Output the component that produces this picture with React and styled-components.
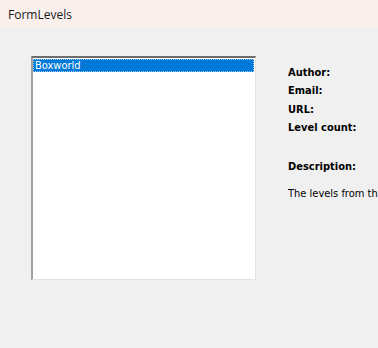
import styled, { createGlobalStyle } from 'styled-components';

const GlobalStyle = createGlobalStyle`
  html, body {
    margin: 0;
    padding: 0;
    background: #f0f0f0;
  }
`;

const Window = styled.div`
  width: 378px;
  height: 348px;
  background: #f0f0f0;
  display: flex;
  flex-direction: column;
  overflow: hidden;
`;

const TitleBar = styled.div`
  height: 28px;
  flex: none;
  background: #f9f0ee;
  display: flex;
  align-items: center;
  padding-left: 8px;
  font-family: "Segoe UI", "Open Sans", "Noto Sans", sans-serif;
  font-size: 12px;
  color: #1b1b1b;
`;

const Body = styled.div`
  display: flex;
  padding: 28px 0 0 31px;
  gap: 32px;
  overflow: hidden;
`;

const ListBox = styled.div`
  flex: none;
  width: 225px;
  height: 224px;
  box-sizing: border-box;
  background: #fff;
  border-style: solid;
  border-width: 2px 1px 1px 2px;
  border-color: #6d6d6d #e3e3e3 #e3e3e3 #a0a0a0;
  padding: 1px 1px 0 0;
`;

const ListItem = styled.div`
  height: 13px;
  line-height: 13px;
  padding-left: 2px;
  font-family: Tahoma, "DejaVu Sans", "Liberation Sans", sans-serif;
  font-stretch: condensed;
  font-size: 11px;
  color: ${p => (p.selected ? '#fff' : '#000')};
  background: ${p => (p.selected ? '#0078d7' : 'transparent')};
  outline: ${p => (p.selected ? '1px dotted #9ec9f0' : 'none')};
  outline-offset: -1px;
`;

const Info = styled.div`
  flex: none;
  display: flex;
  flex-direction: column;
  padding-top: 10px;
  font-family: Tahoma, "DejaVu Sans", "Liberation Sans", sans-serif;
  font-stretch: condensed;
  font-size: 11px;
  color: #000;
  white-space: nowrap;
`;

const Label = styled.div`
  font-weight: bold;
  height: 18.3px;
  line-height: 14px;
  margin-top: ${p => p.gap || 0}px;
`;

const Text = styled.div`
  margin-top: 9px;
  line-height: 14px;
`;

export default function App() {
  return (
    <>
      <GlobalStyle />
      <Window>
        <TitleBar>FormLevels</TitleBar>
        <Body>
          <ListBox>
            <ListItem selected>Boxworld</ListItem>
          </ListBox>
          <Info>
            <Label>Author:</Label>
            <Label>Email:</Label>
            <Label>URL:</Label>
            <Label>Level count:</Label>
            <Label gap={21}>Description:</Label>
            <Text>The levels from the original Boxworld game</Text>
          </Info>
        </Body>
      </Window>
    </>
  );
}
